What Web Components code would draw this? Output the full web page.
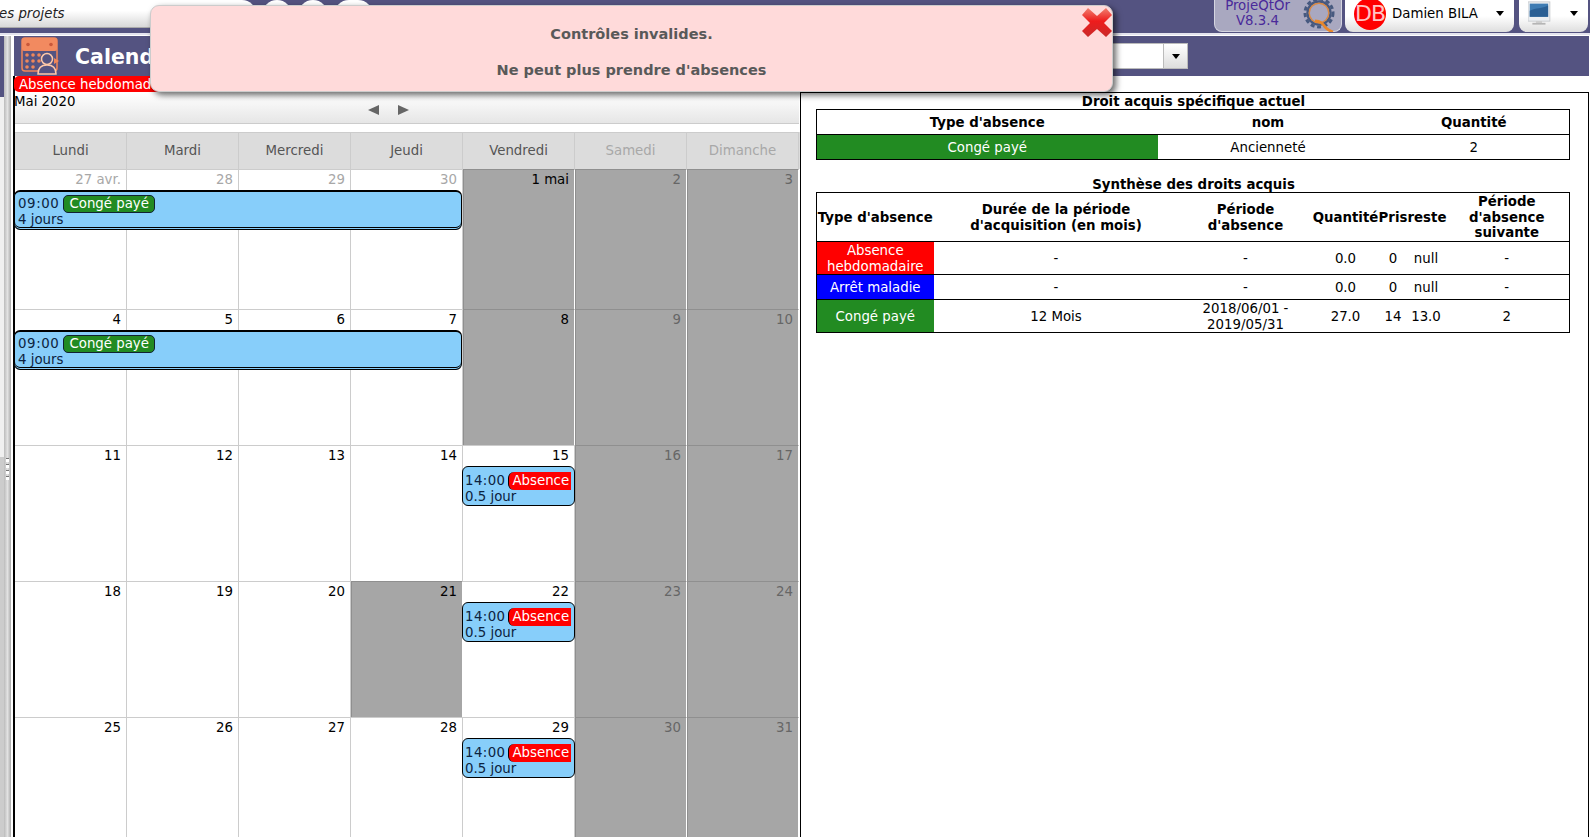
<!DOCTYPE html>
<html lang="fr">
<head>
<meta charset="utf-8">
<title>ProjeQtOr</title>
<style>
  html, body { margin: 0; height: 837px; overflow: hidden; background: #fff; }
  body { font-family: "DejaVu Sans", Verdana, sans-serif; font-size: 13.33px; color: #000; }
  .main { display: flex; }
  .content { width: 1575px; }
  .split { display: flex; }
</style>
</head>
<body>
<pq-topbar></pq-topbar>
<div class="main">
  <pq-rail></pq-rail>
  <div class="content">
    <pq-titlebar></pq-titlebar>
    <div class="split">
      <pq-calendar>
        <cal-week first>
          <cal-day col="1" n="27 avr." other></cal-day>
          <cal-day col="2" n="28" other></cal-day>
          <cal-day col="3" n="29" other></cal-day>
          <cal-day col="4" n="30" other></cal-day>
          <cal-day col="5" n="1 mai" off></cal-day>
          <cal-day col="6" n="2" weekend></cal-day>
          <cal-day col="7" n="3" weekend></cal-day>
          <cal-event col="1" span="4" time="09:00" label="Congé payé" color="#228b22" info="4 jours"></cal-event>
        </cal-week>
        <cal-week>
          <cal-day col="1" n="4"></cal-day>
          <cal-day col="2" n="5"></cal-day>
          <cal-day col="3" n="6"></cal-day>
          <cal-day col="4" n="7"></cal-day>
          <cal-day col="5" n="8" off></cal-day>
          <cal-day col="6" n="9" weekend></cal-day>
          <cal-day col="7" n="10" weekend></cal-day>
          <cal-event col="1" span="4" time="09:00" label="Congé payé" color="#228b22" info="4 jours"></cal-event>
        </cal-week>
        <cal-week>
          <cal-day col="1" n="11"></cal-day>
          <cal-day col="2" n="12"></cal-day>
          <cal-day col="3" n="13"></cal-day>
          <cal-day col="4" n="14"></cal-day>
          <cal-day col="5" n="15"></cal-day>
          <cal-day col="6" n="16" weekend></cal-day>
          <cal-day col="7" n="17" weekend></cal-day>
          <cal-event col="5" span="1" time="14:00" label="Absence" color="#ff0000" info="0.5 jour"></cal-event>
        </cal-week>
        <cal-week>
          <cal-day col="1" n="18"></cal-day>
          <cal-day col="2" n="19"></cal-day>
          <cal-day col="3" n="20"></cal-day>
          <cal-day col="4" n="21" off></cal-day>
          <cal-day col="5" n="22"></cal-day>
          <cal-day col="6" n="23" weekend></cal-day>
          <cal-day col="7" n="24" weekend></cal-day>
          <cal-event col="5" span="1" time="14:00" label="Absence" color="#ff0000" info="0.5 jour"></cal-event>
        </cal-week>
        <cal-week>
          <cal-day col="1" n="25"></cal-day>
          <cal-day col="2" n="26"></cal-day>
          <cal-day col="3" n="27"></cal-day>
          <cal-day col="4" n="28"></cal-day>
          <cal-day col="5" n="29"></cal-day>
          <cal-day col="6" n="30" weekend></cal-day>
          <cal-day col="7" n="31" weekend></cal-day>
          <cal-event col="5" span="1" time="14:00" label="Absence" color="#ff0000" info="0.5 jour"></cal-event>
        </cal-week>
      </pq-calendar>
      <pq-rights></pq-rights>
    </div>
  </div>
</div>
<pq-alert>
  <div>Contrôles invalides.</div>
  <div>Ne peut plus prendre d'absences</div>
</pq-alert>

<script>
// Barre du haut
class PqTopbar extends HTMLElement {
  connectedCallback() {
    this.attachShadow({ mode: "open" }).innerHTML = `
      <style>
        :host { display: block; height: 36px; background: #fff; }
        .bar { display: flex; height: 33px; background: #545381; overflow: hidden; }
        .menu { width: 256px; height: 28px; box-sizing: border-box; border-bottom: 1px solid #aaa; border-radius: 0 14px 14px 0;
          background: linear-gradient(#fff 40%, #d8d8d8); font: italic 13.33px/27px "DejaVu Sans", sans-serif; color: #222; overflow: hidden; }
        .menu span { margin-left: -1px; display: block; }
        .round { height: 30px; border-radius: 15px; background: #fff; margin-left: 6px; }
        .r1, .r2 { width: 30px; }
        .r3 { width: 39px; }
        .spring { flex: 1; }
        .version { width: 128px; height: 32px; box-sizing: border-box; border-radius: 0 0 8px 8px; border: 1px solid #d5d5e0; border-top: 0;
          background: #a9a8c0; color: #4a2a9a; display: flex; align-items: flex-start; }
        .version div { width: 85px; text-align: center; font-size: 13.33px; line-height: 15px; margin-top: -2px; }
        .user, .screen { height: 32px; box-sizing: border-box; border-radius: 0 0 8px 8px; margin-left: 3px;
          background: linear-gradient(#fff 50%, #dedede); display: flex; align-items: center; overflow: hidden; }
        .user { width: 169px; padding-left: 9px; font-size: 13.33px; }
        .avatar { width: 32px; height: 32px; margin-top: -4px; border-radius: 50%; background: #f00; color: #ffc4c4; font-size: 22px; line-height: 32px; text-align: center; letter-spacing: -1px; flex: none; }
        .name { margin-left: 6px; flex: 1; margin-top: -5px; }
        .arrow { width: 0; height: 0; border: 4px solid transparent; border-top: 5px solid #000; border-bottom: 0; margin-right: 10px; margin-top: -5px; }
        .screen { width: 69px; margin-left: 5px; padding-left: 9px; margin-right: 2px; }
        .screen svg { flex: 1; }
        .line { height: 2px; background: #e4e4ee; }
      </style>
      <div class="bar">
        <div class="menu"><span>es projets</span></div>
        <div class="round r1"></div><div class="round r2"></div><div class="round r3"></div>
        <div class="spring"></div>
        <div class="version">
          <div>ProjeQtOr<br>V8.3.4</div>
          <svg width="40" height="32" viewBox="0 0 40 32">
            <circle cx="19" cy="13" r="14" fill="none" stroke="#47597f" stroke-width="3" stroke-dasharray="4 2.6"/>
            <circle cx="19" cy="13" r="11.5" fill="none" stroke="#47597f" stroke-width="2.4"/>
            <circle cx="19" cy="13" r="9.8" fill="none" stroke="#d98a45" stroke-width="1.4"/>
            <path d="M15 21c6 0 8 3 11 7 2 2 4 3 7 4" fill="none" stroke="#e8872b" stroke-width="2.8"/>
          </svg>
        </div>
        <div class="user"><div class="avatar">DB</div><div class="name">Damien BILA</div><div class="arrow"></div></div>
        <div class="screen">
          <svg height="30" viewBox="0 0 48 30" preserveAspectRatio="xMinYMin">
            <rect x="0" y="1" width="25" height="22" fill="#eceff2" stroke="#c4c8cc"/>
            <rect x="2" y="3" width="21" height="15" fill="#3f7cb3"/>
            <path d="M2 11 C9 7 16 9 23 5 V18 H2Z" fill="#2a5f94"/>
            <rect x="9" y="23" width="7" height="2" fill="#ccc"/>
            <rect x="5" y="25" width="15" height="2" fill="#b5b5b5"/>
          </svg>
          <div class="arrow"></div>
        </div>
      </div>
      <div class="line"></div>`;
  }
}

// Colonne de gauche repliee + separateur
class PqRail extends HTMLElement {
  connectedCallback() {
    this.attachShadow({ mode: "open" }).innerHTML = `
      <style>
        :host { display: flex; width: 14px; height: 801px; flex: none; }
        .side { width: 4px; background: linear-gradient(#545381 61px, #f0f0f0 61px, #f0f0f0 421px, #ccc 421px); }
        .splitter { width: 7px; background: linear-gradient(90deg, #bbb, #e2e2e2 50%, #aaa); display: flex; flex-direction: column; align-items: center; padding-top: 423px; gap: 3px; box-sizing: border-box; }
        .splitter i { display: block; width: 3px; height: 3px; background: #fff; box-shadow: 0 -1px 0 #777; }
        .gap { width: 2px; background: #fff; }
        .edge { width: 1px; margin-top: 40px; background: #000; }
      </style>
      <div class="side"></div>
      <div class="splitter"><i></i><i></i><i></i><i></i></div>
      <div class="gap"></div>
      <div class="edge"></div>`;
  }
}

// Titre de la page, avec icone et liste
class PqTitlebar extends HTMLElement {
  connectedCallback() {
    this.attachShadow({ mode: "open" }).innerHTML = `
      <style>
        :host { display: flex; align-items: center; height: 40px; width: 1575px; background: #545381; }
        svg { margin-left: 7px; flex: none; }
        .title { margin-left: 16px; padding-top: 2px; font: bold 20.5px "DejaVu Sans", sans-serif; color: #fff; flex: 1; }
        .select { display: flex; width: 100px; height: 26px; margin-right: 401px; background: #fff; box-sizing: border-box; border: 1px solid #bbb; justify-content: flex-end; }
        .btn { width: 23px; border-left: 1px solid #bbb; background: linear-gradient(#fff, #ddd); display: flex; align-items: center; justify-content: center; }
        .btn i { width: 0; height: 0; border: 4.5px solid transparent; border-top: 5px solid #000; border-bottom: 0; }
      </style>
      <svg width="38" height="38" viewBox="0 0 38 38">
        <rect x="1" y="1" width="35" height="33" rx="3" fill="none" stroke="#f0875a" stroke-width="1.5"/>
        <rect x="1" y="1" width="35" height="13" rx="2" fill="#f28a60"/>
        <circle cx="7" cy="7.5" r="1.8" fill="#c9583a"/><circle cx="30" cy="7.5" r="1.8" fill="#c9583a"/>
        <g fill="#f0875a">
          <circle cx="6" cy="18" r="1.8"/><circle cx="12" cy="18" r="1.8"/><circle cx="18" cy="18" r="1.8"/>
          <circle cx="6" cy="24" r="1.8"/><circle cx="12" cy="24" r="1.8"/><circle cx="18" cy="24" r="1.8"/>
          <circle cx="6" cy="30" r="1.8"/><circle cx="12" cy="30" r="1.8"/>
          <path d="M33 21l5 3-5 3z"/>
        </g>
        <circle cx="26" cy="22" r="5.5" fill="#545381" stroke="#ffc9a8" stroke-width="1.5"/>
        <path d="M17 37c0-6 3-9 9-9s9 3 9 9z" fill="#545381" stroke="#ffc9a8" stroke-width="1.5"/>
      </svg>
      <div class="title">Calendrier</div>
      <div class="select"><div class="btn"><i></i></div></div>`;
  }
}

// Calendrier du mois
class PqCalendar extends HTMLElement {
  connectedCallback() {
    const jours = ["Lundi", "Mardi", "Mercredi", "Jeudi", "Vendredi", "Samedi", "Dimanche"];
    const head = jours.map((j, i) => `<div class="${i > 4 ? "we" : ""}">${j}</div>`).join("");
    this.attachShadow({ mode: "open" }).innerHTML = `
      <style>
        :host { display: block; width: 786px; flex: none; height: 761px; overflow: hidden; background: linear-gradient(#000, #000) 0 0 / 1px 100% no-repeat; }
        .legend { height: 16px; margin-right: 600px; border-radius: 5px 0 0 5px; background: #f00; color: #fff; line-height: 17px; padding-left: 5px; white-space: nowrap; overflow: hidden; }
        .nav { height: 31px; box-sizing: border-box; margin: 1px 1px 0 1px; border-bottom: 1px solid #ccc; background: linear-gradient(#fff, #e6e6e6); position: relative; line-height: 17px; text-indent: -1px; }
        .nav .arrows { position: absolute; left: 353px; top: 12px; display: flex; gap: 19px; }
        .nav i { display: block; width: 0; height: 0; border: 5.5px solid transparent; }
        .prev { border-right: 11px solid #666 !important; border-left: 0 !important; }
        .next { border-left: 11px solid #666 !important; border-right: 0 !important; }
        .head { display: grid; grid-template-columns: repeat(7, 112px); height: 37px; margin: 8px 0 0 1px; background: #dcdcdc; }
        .head div { text-align: center; line-height: 36px; color: #555; border-right: 1px solid #ccc; border-top: 1px solid #ccc; box-sizing: border-box; }
        .head .we { color: #a8a8a8; }
      </style>
      <div class="legend">Absence hebdomadaire</div>
      <div class="nav">Mai 2020<div class="arrows"><i class="prev"></i><i class="next"></i></div></div>
      <div class="head">${head}</div>
      <slot></slot>`;
  }
}

// Une semaine : grille de 7 colonnes, jours et evenements sur la meme ligne
class CalWeek extends HTMLElement {
  connectedCallback() {
    this.attachShadow({ mode: "open" }).innerHTML = `
      <style>
        :host { display: grid; margin-left: 1px; grid-template-columns: repeat(7, 112px); grid-template-rows: 136px; }
        :host([first]) { grid-template-rows: 140px; }
      </style>
      <slot></slot>`;
  }
}

class CalDay extends HTMLElement {
  connectedCallback() {
    this.style.gridColumn = this.getAttribute("col");
    this.style.gridRow = "1";
    this.attachShadow({ mode: "open" }).innerHTML = `
      <style>
        :host { display: block; box-sizing: border-box; border-top: 1px solid #ccc; border-right: 1px solid #ccc; background: #fff;
          text-align: right; padding: 2px 5px 0 0; line-height: 16px; color: #000; }
        :host([other]) { color: #a8a8a8; }
        :host([off]), :host([weekend]) { background: #a6a6a6; border-top-color: #8f8f8f; border-left: 1px solid #8f8f8f; border-right: 1px solid #fff; }
        :host([weekend]) { color: #666; }
      </style>
      ${this.getAttribute("n")}`;
  }
}

class CalEvent extends HTMLElement {
  connectedCallback() {
    const col = this.getAttribute("col");
    const span = this.getAttribute("span");
    this.style.gridColumn = col + " / span " + span;
    this.style.gridRow = "1";
    const color = this.getAttribute("color");
    const long = span > 1;
    this.attachShadow({ mode: "open" }).innerHTML = `
      <style>
        :host { display: block; align-self: start; box-sizing: border-box; margin: 21px ${long ? "1px" : "0"} 0 -1px; height: 40px;
          background: #87cefa; border: 1px solid #000; border-radius: 6px; padding: 5px 3px 0 2px; line-height: 16px; color: #0c2340; z-index: 1; overflow: hidden;
          ${long ? "border-top-width: 2px; padding-top: 3px; padding-left: 3px; box-shadow: inset 0 -1px 0 #87cefa, inset 0 -2px 0 #000;" : ""} }
        .l { display: flex; height: 17px; align-items: center; gap: ${long ? 4 : 3}px; white-space: nowrap; }
        .t { letter-spacing: ${long ? .6 : .4}px; }
        .b { height: 18px; box-sizing: border-box; line-height: 16px; padding: 0 5px; background: ${color}; color: #fff; border-radius: 5px; border: 1px solid #123; ${long ? "" : "border: 0; border-left: 1px solid #000; border-radius: 6px 0 0 6px; line-height: 18px; flex: 1; padding: 0 0 0 3px;"} }
      </style>
      <div class="l"><span class="t">${this.getAttribute("time")}</span><span class="b">${this.getAttribute("label")}</span></div>
      <div>${this.getAttribute("info")}</div>`;
  }
}

// Panneau de droite : droits acquis
class PqRights extends HTMLElement {
  connectedCallback() {
    const synthese = [
      ["Absence<br>hebdomadaire", "#ff0000", "-", "-", "0.0", "0", "null", "-", 33],
      ["Arrêt maladie", "#0000ff", "-", "-", "0.0", "0", "null", "-", 25],
      ["Congé payé", "#228b22", "12 Mois", "2018/06/01 -<br>2019/05/31", "27.0", "14", "13.0", "2", 33]
    ];
    const lignes = synthese.map(l => `
      <tr style="height:${l[8]}px">
        <td style="background:${l[1]};color:#fff">${l[0]}</td>
        <td>${l[2]}</td><td>${l[3]}</td><td>${l[4]}</td><td>${l[5]}</td><td>${l[6]}</td><td>${l[7]}</td>
      </tr>`).join("");
    this.attachShadow({ mode: "open" }).innerHTML = `
      <style>
        :host { display: block; box-sizing: border-box; width: 789px; height: 761px; margin-top: 16px; border: 1px solid #000; border-bottom: 0; padding: 0 17px 0 15px; }
        h3 { margin: 0; box-sizing: border-box; font-size: 13.33px; line-height: 16px; padding-top: 1px; height: 16px; text-align: center; font-weight: bold; }
        h3.second { margin-top: 16px; padding-top: 1px; }
        table { width: 754px; border-collapse: collapse; table-layout: fixed; line-height: 15.5px; border-left: 1px solid #000; border-right: 1px solid #000; }
        td, th { border-top: 1px solid #000; border-bottom: 1px solid #000; padding: 1px 0 0 0; text-align: center; }
        .t1 td, .t1 th { padding-top: 2px; }
        .t1 tr { height: 25px; }
        .t2 th { white-space: nowrap; }
      </style>
      <h3>Droit acquis spécifique actuel</h3>
      <table class="t1">
        <colgroup><col style="width:341px"><col style="width:221px"><col></colgroup>
        <tr><th>Type d'absence</th><th>nom</th><th>Quantité</th></tr>
        <tr><td style="background:#228b22;color:#fff">Congé payé</td><td>Ancienneté</td><td>2</td></tr>
      </table>
      <h3 class="second">Synthèse des droits acquis</h3>
      <table class="t2">
        <colgroup><col style="width:117px"><col style="width:245px"><col style="width:134px"><col style="width:66px"><col style="width:29px"><col style="width:37px"><col></colgroup>
        <tr style="height:49px"><th>Type d'absence</th><th>Durée de la période<br>d'acquisition (en mois)</th><th>Période<br>d'absence</th><th>Quantité</th><th>Pris</th><th>reste</th><th>Période<br>d'absence<br>suivante</th></tr>
        ${lignes}
      </table>`;
  }
}

// Message d'erreur par-dessus la page
class PqAlert extends HTMLElement {
  connectedCallback() {
    this.attachShadow({ mode: "open" }).innerHTML = `
      <style>
        :host { position: absolute; left: 150px; top: 5px; width: 963px; height: 87px; box-sizing: border-box; z-index: 10;
          background: #ffdada; border: 1px solid #ccc; border-radius: 9px; box-shadow: 3px 3px 6px rgba(0,0,0,.6);
          display: flex; flex-direction: column; gap: 20px; align-items: center; padding-top: 20px;
          font-weight: bold; font-size: 14.5px; line-height: 16px; color: #595959; }
        svg { position: absolute; right: -1px; top: 1px; }
      </style>
      <slot></slot>
      <svg width="32" height="31" viewBox="0 0 32 31">
        <defs><linearGradient id="g" x1="0" y1="0" x2="0" y2="1"><stop offset="0" stop-color="#f08070"/><stop offset=".45" stop-color="#ee1c1c"/><stop offset="1" stop-color="#c92a2a"/></linearGradient></defs>
        <path d="M7 1 L16 9 L25 1 L31 8 L23 16 L31 24 L25 30 L16 22 L7 30 L1 24 L9 16 L1 8Z" fill="url(#g)" stroke-linejoin="round"/>
      </svg>`;
  }
}

customElements.define("pq-topbar", PqTopbar);
customElements.define("pq-rail", PqRail);
customElements.define("pq-titlebar", PqTitlebar);
customElements.define("pq-calendar", PqCalendar);
customElements.define("cal-week", CalWeek);
customElements.define("cal-day", CalDay);
customElements.define("cal-event", CalEvent);
customElements.define("pq-rights", PqRights);
customElements.define("pq-alert", PqAlert);
</script>
</body>
</html>
